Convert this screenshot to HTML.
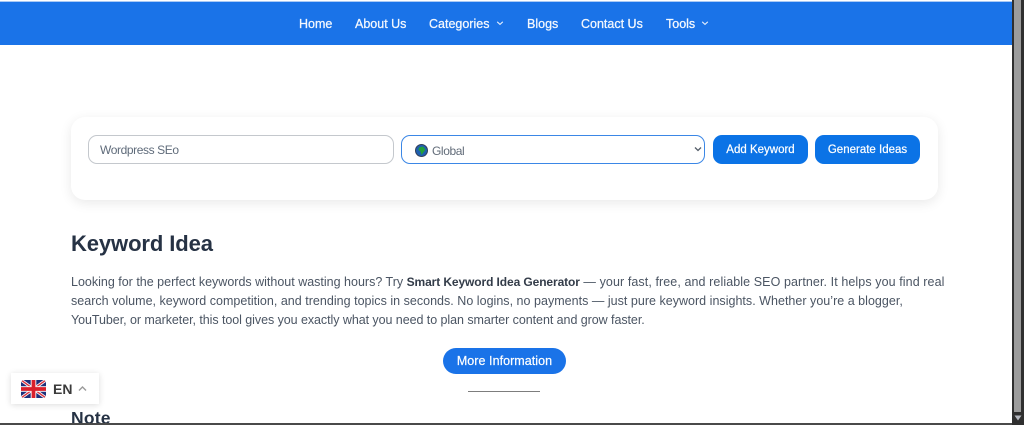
<!DOCTYPE html>
<html lang="en">
<head>
<meta charset="utf-8">
<title>Keyword Idea</title>
<style>
html,body{margin:0;padding:0;width:1024px;height:425px;overflow:hidden;background:#fff;font-family:"Liberation Sans",sans-serif;}
.a{position:absolute;white-space:nowrap;}
.nav{left:0;top:1px;width:1012px;height:44px;background:#1a73e8;border-top:1px solid #a9c9f5;box-sizing:border-box;}
.n{top:16px;color:#f4f8fe;font-size:12.5px;line-height:16px;font-weight:400;-webkit-text-stroke:.25px #f4f8fe;}
.p{left:71px;color:#4b5563;font-size:12.5px;line-height:20px;}
.btn{top:135px;height:29px;border-radius:9px;background:#0b73e6;color:#fff;font-size:11.5px;line-height:30px;text-align:center;-webkit-text-stroke:.2px #fff;}
</style>
</head>
<body>
<div class="a nav"></div>
<div class="a n" style="left:299px">Home</div>
<div class="a n" style="left:355px">About Us</div>
<div class="a n" style="left:429px">Categories</div>
<svg class="a" style="left:496px;top:19px" width="8" height="8" viewBox="0 0 8 8"><path d="M1.2 2.8 4 5.4 6.8 2.8" fill="none" stroke="#e4eefc" stroke-width="1.1"/></svg>
<div class="a n" style="left:527px">Blogs</div>
<div class="a n" style="left:581px">Contact Us</div>
<div class="a n" style="left:666px">Tools</div>
<svg class="a" style="left:701px;top:19px" width="8" height="8" viewBox="0 0 8 8"><path d="M1.2 2.8 4 5.4 6.8 2.8" fill="none" stroke="#e4eefc" stroke-width="1.1"/></svg>

<div class="a" style="left:71px;top:117px;width:867px;height:83px;background:#fff;border-radius:14px;box-shadow:0 3px 12px rgba(0,0,0,.09)"></div>
<div class="a" style="left:88px;top:135px;width:306px;height:29px;box-sizing:border-box;border:1px solid #c4c8cd;border-radius:9px;background:#fff"></div>
<div class="a" style="left:100px;top:143px;font-size:12px;line-height:15px;color:#5f6b7a;letter-spacing:-.4px">Wordpress SEo</div>
<div class="a" style="left:401px;top:135px;width:304px;height:29px;box-sizing:border-box;border:1px solid #3b87e6;border-radius:9px;background:#fff"></div>
<svg class="a" style="left:415px;top:144px" width="13" height="13" viewBox="0 0 13 13"><circle cx="6.5" cy="6.5" r="6" fill="#1f5fb0" stroke="#33415a" stroke-width="1"/><path d="M4 3.5 8 2.5 10.5 5.5 8 9 6.5 11 5.5 7.5 3.5 6Z" fill="#22a03c"/></svg>
<div class="a" style="left:432px;top:144px;font-size:12px;line-height:15px;color:#626c79;letter-spacing:-.4px">Global</div>
<svg class="a" style="left:694px;top:145px" width="8" height="8" viewBox="0 0 8 8"><path d="M1 2.5 4 5.5 7 2.5" fill="none" stroke="#555e69" stroke-width="1.3"/></svg>
<div class="a btn" style="left:713px;width:95px">Add Keyword</div>
<div class="a btn" style="left:815px;width:105px">Generate Ideas</div>

<div class="a" style="left:71px;top:231px;font-size:22px;line-height:26px;font-weight:700;color:#263244;letter-spacing:-.1px">Keyword Idea</div>
<div class="a p" style="top:272px">Looking for the perfect keywords without wasting hours? Try <b style="color:#333c49;font-size:12px;letter-spacing:-.1px">Smart Keyword Idea Generator</b><span style="letter-spacing:.09px"> — your fast, free, and reliable SEO partner. It helps you find real</span></div>
<div class="a p" style="top:291px;letter-spacing:.02px">search volume, keyword competition, and trending topics in seconds. No logins, no payments — just pure keyword insights. Whether you’re a blogger,</div>
<div class="a p" style="top:310px;letter-spacing:-.06px">YouTuber, or marketer, this tool gives you exactly what you need to plan smarter content and grow faster.</div>

<div class="a" style="left:443px;top:348px;width:123px;height:26px;border-radius:13px;background:#1a73e8;color:#fff;font-size:12.5px;line-height:26px;text-align:center;letter-spacing:.05px;-webkit-text-stroke:.2px #fff">More Information</div>
<div class="a" style="left:468px;top:391px;width:72px;height:1px;background:#7d7d7d"></div>
<div class="a" style="left:71px;top:408px;font-size:17.5px;line-height:20px;font-weight:700;color:#263244;letter-spacing:.2px">Note</div>

<div class="a" style="left:11px;top:373px;width:88px;height:31px;background:#fff;box-shadow:0 1px 6px rgba(0,0,0,.14)"></div>
<svg class="a" style="left:21px;top:380px;border-radius:3px" width="25" height="18" viewBox="0 0 25 18"><rect width="25" height="18" fill="#1d2f7a"/><path d="M0 0 25 18M25 0 0 18" stroke="#fff" stroke-width="3"/><path d="M0 0 25 18M25 0 0 18" stroke="#d9343f" stroke-width="1.4"/><path d="M12.5 0V18M0 9H25" stroke="#fff" stroke-width="5.6"/><path d="M12.5 0V18M0 9H25" stroke="#d9202c" stroke-width="3.8"/></svg>
<div class="a" style="left:53px;top:380px;font-size:14px;line-height:18px;font-weight:700;color:#3b3b3b">EN</div>
<svg class="a" style="left:77px;top:384px" width="11" height="9" viewBox="0 0 11 9"><path d="M2 6.5 5.5 3 9 6.5" fill="none" stroke="#9a9a9a" stroke-width="1.4"/></svg>

<div class="a" style="left:1012px;top:0;width:12px;height:425px;background:#2f2f2f"></div>
<div class="a" style="left:1014px;top:0;width:7px;height:412px;background:#9c9c9c"></div>
<svg class="a" style="left:1014px;top:415px" width="8" height="6" viewBox="0 0 8 6"><path d="M.5 .5H7.5L4 5.5Z" fill="#b5b8c0"/></svg>
<div class="a" style="left:0;top:423px;width:1012px;height:2px;background:#4a4a4a"></div>
</body>
</html>
